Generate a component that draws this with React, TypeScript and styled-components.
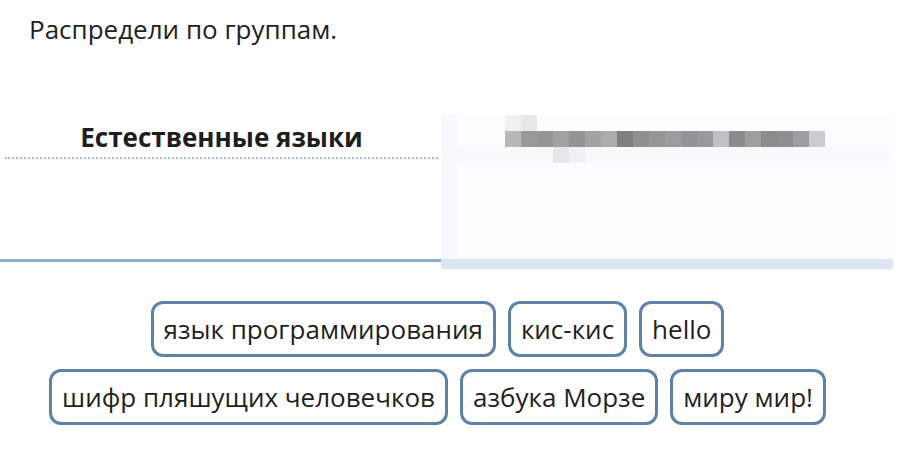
import styled, { createGlobalStyle } from 'styled-components'

const GlobalStyle = createGlobalStyle`
  body {
    margin: 0;
    background: #ffffff;
    font-family: 'Open Sans', 'Noto Sans', sans-serif;
    color: #222222;
  }
`

const headerPixels = [
  '#b9b8b6', '#9a9998', '#939596', '#a2a19f', '#939594',
  '#a3a3a1', '#abacae', '#807f7d', '#8e8f91', '#989694',
  '#9c9c9c', '#939497', '#9a9898', '#bfc0c4', '#8b8b8b',
  '#a09f9c', '#8d8b8c', '#8e8f91', '#9d9ea0', '#cbccce',
]

const chipRows = [
  ['язык программирования', 'кис-кис', 'hello'],
  ['шифр пляшущих человечков', 'азбука Морзе', 'миру мир!'],
]

const Page = styled.div`
  padding: 11px 0 0 0;
  width: 918px;
`

const Title = styled.div`
  margin-left: 29px;
  font-size: 26px;
  line-height: 36px;
`

const Board = styled.div`
  display: grid;
  grid-template-columns: 441px 452px;
  align-items: start;
  margin-top: 58px;
`

const GroupColumn = styled.div`
  display: flex;
  flex-direction: column;
  border-bottom: 3px solid #8aadd4;
`

const GroupHeader = styled.div`
  margin: 0 3px 0 5px;
  height: 54px;
  display: flex;
  align-items: center;
  justify-content: center;
  padding-top: 12px;
  box-sizing: border-box;
  font-size: 26px;
  font-weight: 700;
  color: #1e1e1e;
  border-bottom: 2px dotted #9dbbdc;
`

const GroupBody = styled.div`
  height: 100px;
`

const BlurredColumn = styled.div`
  margin-top: 10px;
  display: flex;
  flex-direction: column;
`

const BlurPanel = styled.div`
  position: relative;
  height: 144px;
  background: #fcfdfe;
  border-left: 16px solid #f7f9fc;
`

const PixelRow = styled.div<{ $top: number; $left: number }>`
  position: absolute;
  top: ${(p) => p.$top}px;
  left: ${(p) => p.$left}px;
  display: flex;
`

const Pixel = styled.div`
  width: 16px;
  height: 16px;
`

const PixelStrip = styled.div`
  position: absolute;
  top: 32px;
  left: -16px;
  width: 448px;
  height: 16px;
  background: #f7f9fb;
`

const BlurBar = styled.div`
  height: 10px;
  background: #dce6f1;
`

const ChipArea = styled.div`
  width: 875px;
  margin-top: 32px;
  display: flex;
  flex-direction: column;
  gap: 12px;
`

const ChipRow = styled.div`
  display: flex;
  justify-content: center;
  gap: 12px;
`

const Chip = styled.div`
  border: 3px solid #5f80a7;
  border-radius: 12px;
  padding: 7px 10px;
  font-size: 26px;
  line-height: 36px;
  color: #1f1f1f;
  background: #ffffff;
  white-space: nowrap;
`

export default function App() {
  return (
    <Page>
      <GlobalStyle />
      <Title>Распредели по группам.</Title>
      <Board>
        <GroupColumn>
          <GroupHeader>Естественные языки</GroupHeader>
          <GroupBody />
        </GroupColumn>
        <BlurredColumn>
          <BlurPanel>
            <PixelStrip />
            <PixelRow $top={0} $left={48}>
              <Pixel style={{ background: '#f0f0f0' }} />
              <Pixel style={{ background: '#e8e8e8' }} />
            </PixelRow>
            <PixelRow $top={16} $left={48}>
              {headerPixels.map((c, i) => (
                <Pixel key={i} style={{ background: c }} />
              ))}
            </PixelRow>
            <PixelRow $top={32} $left={96}>
              <Pixel style={{ background: '#e6e7e9' }} />
              <Pixel style={{ background: '#eef2f6' }} />
            </PixelRow>
          </BlurPanel>
          <BlurBar />
        </BlurredColumn>
      </Board>
      <ChipArea>
        {chipRows.map((row, r) => (
          <ChipRow key={r}>
            {row.map((label) => (
              <Chip key={label}>{label}</Chip>
            ))}
          </ChipRow>
        ))}
      </ChipArea>
    </Page>
  )
}
